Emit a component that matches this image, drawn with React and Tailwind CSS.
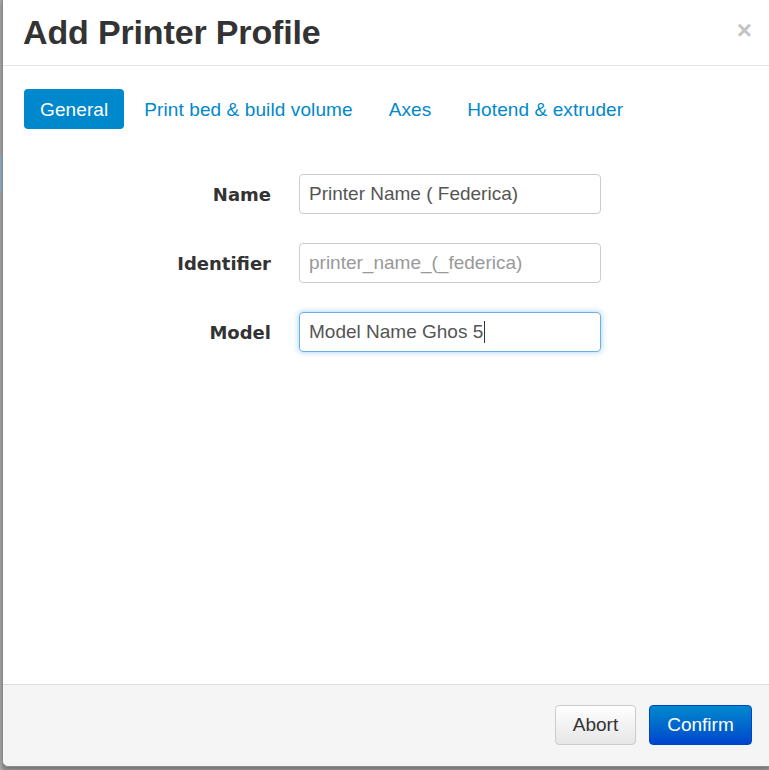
import React from 'react';

const tabs = ['General', 'Print bed & build volume', 'Axes', 'Hotend & extruder'];

const fields = [
  { label: 'Name', value: 'Printer Name ( Federica)' },
  { label: 'Identifier', placeholder: 'printer_name_(_federica)' },
  { label: 'Model', value: 'Model Name Ghos 5', focused: true },
];

export default function App() {
  return (
    <div className="w-[769px] h-[770px] bg-[#9c9c9c] flex overflow-hidden font-['Liberation_Sans',Arial,sans-serif]">
      {/* backdrop sliver */}
      <div className="w-[2px] flex flex-col">
        <div className="h-[157px] bg-[#a8a8a8]" />
        <div className="h-[34px] bg-[#8fb4cb]" />
        <div className="flex-1 bg-[#a8a8a8]" />
      </div>

      <div className="flex-1 h-[767px] bg-white border-l border-b border-[#8a8a8a] rounded-bl-[6px] flex flex-col shadow-[0_2px_4px_rgba(0,0,0,0.3)]">
        {/* Header */}
        <div className="h-[66px] border-b border-[#e5e5e5] flex items-center justify-between pl-[20px] pr-[17px] shrink-0">
          <h3 className="text-[34px] font-bold text-[#333] leading-none tracking-[-0.15px] -mt-[2px]">Add Printer Profile</h3>
          <span className="text-[26px] font-bold text-[#c4c4c4] leading-none -mt-[6px]">×</span>
        </div>

        {/* Body */}
        <div className="flex-1 pt-[23px] pl-[21px]">
          <div className="flex gap-[4px] h-[40px]">
            {tabs.map((t, i) => (
              <div
                key={t}
                className={
                  i === 0
                    ? 'px-[16px] pt-[2px] flex items-center rounded-[4px] bg-[#0088cc] text-white text-[19px] tracking-[0.1px]'
                    : 'px-[16px] pt-[2px] flex items-center text-[#0088cc] text-[19px] tracking-[0.1px]'
                }
              >
                {t}
              </div>
            ))}
          </div>

          <div className="mt-[45px] flex flex-col gap-[29px]">
            {fields.map((f) => (
              <div key={f.label} className="flex items-center">
                <label className="w-[247px] text-right text-[18px] font-bold text-[#333] font-['DejaVu_Sans',sans-serif]">
                  {f.label}
                </label>
                <div
                  className={
                    f.focused
                      ? 'ml-[28px] w-[302px] h-[40px] rounded-[4px] border border-[#66afe9] shadow-[0_0_6px_rgba(102,175,233,0.6)] flex items-center px-[9px] text-[19px] text-[#555]'
                      : 'ml-[28px] w-[302px] h-[40px] rounded-[4px] border border-[#cccccc] flex items-center px-[9px] text-[19px] text-[#555]'
                  }
                >
                  {f.value ? (
                    <span>{f.value}</span>
                  ) : (
                    <span className="text-[#999]">{f.placeholder}</span>
                  )}
                  {f.focused && <span className="w-px h-[22px] bg-[#333] ml-[1px]" />}
                </div>
              </div>
            ))}
          </div>
        </div>

        {/* Footer */}
        <div className="h-[82px] border-t border-[#dddddd] bg-[#f5f5f5] rounded-bl-[6px] flex items-start justify-end pt-[20px] pr-[17px] gap-[13px] shrink-0">
          <button className="h-[40px] w-[81px] rounded-[4px] border border-[#cccccc] bg-gradient-to-b from-white to-[#e6e6e6] text-[#333] text-[19px]">
            Abort
          </button>
          <button className="h-[40px] w-[103px] rounded-[4px] border border-[#0044cc] bg-gradient-to-b from-[#0088cc] to-[#0044cc] text-white text-[19px]">
            Confirm
          </button>
        </div>
      </div>
    </div>
  );
}
